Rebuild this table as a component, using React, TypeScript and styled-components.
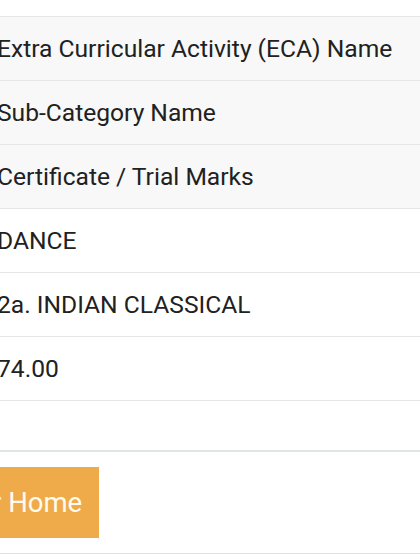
import React from "react";
import styled, { createGlobalStyle } from "styled-components";

const Global = createGlobalStyle`
  html, body { margin: 0; padding: 0; background: #ffffff; }
  body { font-family: Roboto, "Noto Sans", Arial, sans-serif; overflow: hidden; }
  #root { width: 420px; height: 560px; overflow: hidden; }
`;

const Page = styled.div`
  padding-top: 16px;
  margin-left: -3px;
  width: 423px;
`;

const Table = styled.div`
  display: flex;
  flex-direction: column;
  border-bottom: 1px solid #dfe3e6;
`;

const Row = styled.div<{ $shade?: boolean; $h?: number }>`
  display: flex;
  align-items: center;
  height: ${(p) => p.$h ?? 64}px;
  box-sizing: border-box;
  border-top: 1px solid #e6e6e6;
  background: ${(p) => (p.$shade ? "#f8f8f8" : "#ffffff")};
  font-size: 24.6px;
  color: #212121;
  white-space: nowrap;
`;

const Footer = styled.div`
  display: flex;
  align-items: center;
  height: 103px;
  box-sizing: border-box;
  border-top: 2px solid #dfe4e7;
`;

const Button = styled.button`
  margin-left: -35px;
  height: 71px;
  padding: 0 17px 0 30px;
  border: none;
  background: #efab4a;
  color: #fffbef;
  font-family: Roboto, "Noto Sans", Arial, sans-serif;
  font-size: 27.5px;
  cursor: pointer;
`;

export default function App() {
  return (
    <>
      <Global />
      <Page>
        <Table>
          <Row $shade>Extra Curricular Activity (ECA) Name</Row>
          <Row $shade>Sub-Category Name</Row>
          <Row $shade>Certificate / Trial Marks</Row>
          <Row>DANCE</Row>
          <Row>2a. INDIAN CLASSICAL</Row>
          <Row>74.00</Row>
          <Row $h={50}></Row>
          <Footer>
            <Button>r Home</Button>
          </Footer>
        </Table>
      </Page>
    </>
  );
}
